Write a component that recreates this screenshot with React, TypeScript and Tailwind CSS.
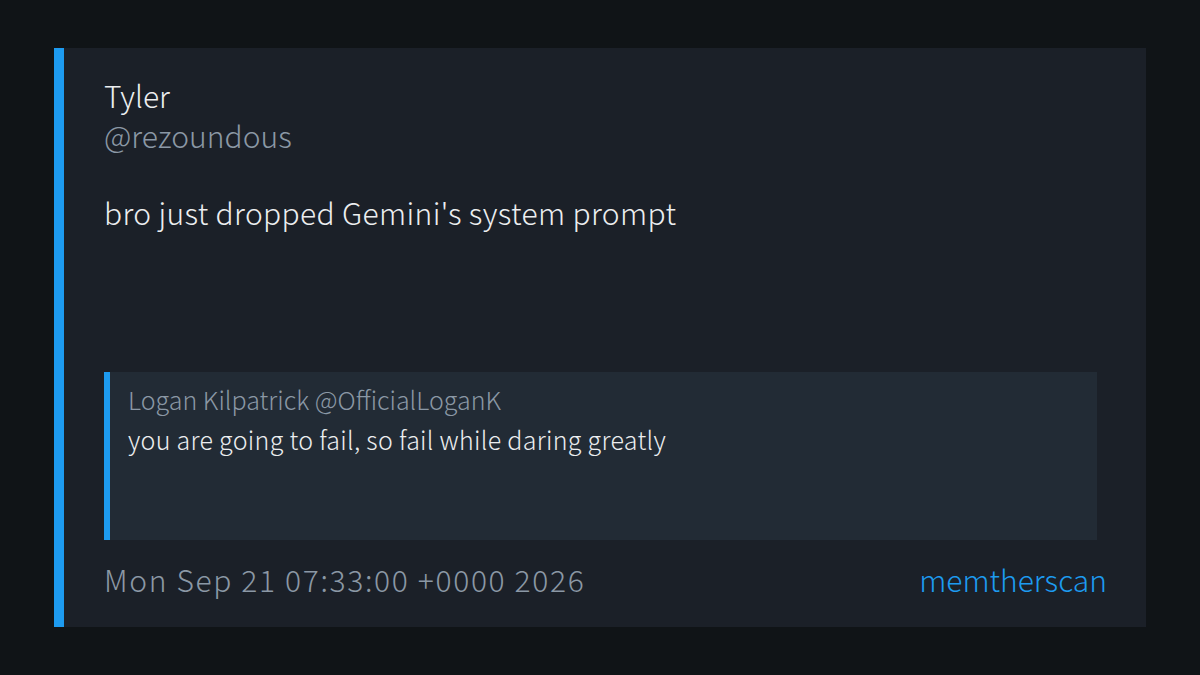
export default function App() {
  return (
    <div className="w-[1200px] h-[675px] bg-[#101417] px-[54px] py-[48px] font-['Noto_Sans_CJK_KR','Noto_Sans',sans-serif] font-light">
      <div className="flex h-full bg-[#1b2028] border-l-[10px] border-[#1d9bf0]">
        <div className="flex flex-1 flex-col pl-[40px] pr-[39px] pt-[27px] pb-[28px]">
          <div className="text-[30px] leading-[40px] text-[#eceef0]">Tyler</div>
          <div className="text-[30px] leading-[40px] text-[#8b98a5]">@rezoundous</div>
          <div className="mt-[37px] text-[30px] leading-[40px] tracking-[0.35px] text-[#eceef0]">
            bro just dropped Gemini's system prompt
          </div>
          <div className="flex-1" />
          <div className="mr-[10px] flex h-[168px] flex-col bg-[#222b35] border-l-[6px] border-[#1d9bf0] pl-[18px] pr-4 pt-[11px]">
            <div className="text-[25px] leading-[32px] text-[#8b98a5]">
              Logan Kilpatrick @OfficialLoganK
            </div>
            <div className="mt-[8px] text-[25px] leading-[32px] tracking-[0.3px] text-[#eceef0]">
              you are going to fail, so fail while daring greatly
            </div>
          </div>
          <div className="mt-[19px] flex items-center justify-between text-[30px] leading-[40px]">
            <span className="tracking-[1.65px] text-[#8b98a5]">Mon Sep 21 07:33:00 +0000 2026</span>
            <span className="text-[#1d9bf0]">memtherscan</span>
          </div>
        </div>
      </div>
    </div>
  );
}
